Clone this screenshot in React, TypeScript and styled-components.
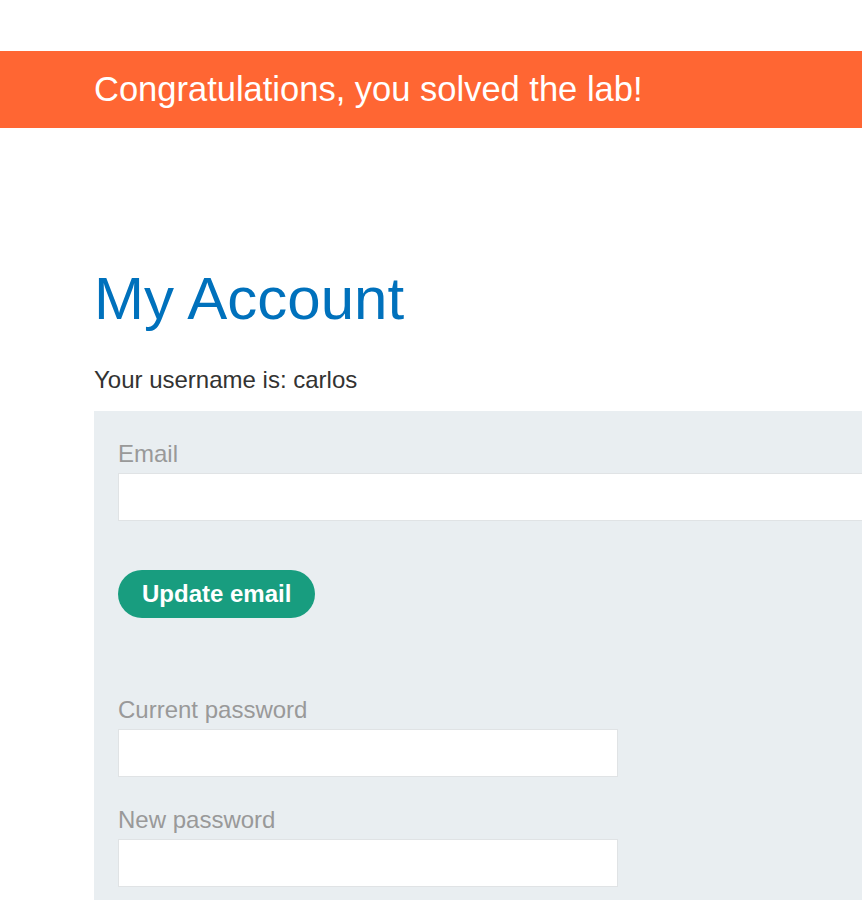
import React from "react";
import styled, { createGlobalStyle } from "styled-components";

const Global = createGlobalStyle`
  html, body { margin: 0; padding: 0; background: #fff; overflow: hidden; }
  body { font-family: "Liberation Sans", Arial, sans-serif; }
`;

const Page = styled.div`
  width: 1100px;
  padding-top: 51px;
`;

const Banner = styled.div`
  background: #ff6633;
  height: 77px;
  display: flex;
  align-items: center;
  padding-left: 94px;
  color: #fff;
  font-size: 34.5px;
`;

const Content = styled.div`
  padding: 135px 0 0 94px;
`;

const Title = styled.h1`
  margin: 0;
  color: #0071bc;
  font-size: 60px;
  font-weight: 400;
  line-height: 72px;
`;

const Username = styled.p`
  margin: 31px 0 0;
  color: #333332;
  font-size: 24px;
  line-height: 28px;
`;

const Panel = styled.form`
  margin-top: 17px;
  background: #e9eef1;
  padding: 29px 24px 20px;
  display: flex;
  flex-direction: column;
`;

const Label = styled.label`
  color: #999;
  font-size: 24px;
  line-height: 28px;
  margin-bottom: 5px;
`;

const Input = styled.input<{ $w?: string }>`
  box-sizing: border-box;
  width: ${(p) => p.$w ?? "100%"};
  height: 48px;
  border: 1px solid #e0e3e5;
  background: #fff;
  margin: 0;
`;

const Button = styled.button`
  align-self: flex-start;
  margin: 49px 0 78px;
  height: 48px;
  padding: 0 24px;
  border: none;
  border-radius: 24px;
  background: #189d7f;
  color: #fff;
  font-family: "Liberation Sans", Arial, sans-serif;
  font-weight: 700;
  font-size: 24px;
`;

const Spacer = styled.div`
  height: 29px;
`;

export default function App() {
  return (
    <>
      <Global />
      <Page>
        <Banner>Congratulations, you solved the lab!</Banner>
        <Content>
          <Title>My Account</Title>
          <Username>Your username is: carlos</Username>
          <Panel>
            <Label>Email</Label>
            <Input />
            <Button type="button">Update email</Button>
            <Label>Current password</Label>
            <Input $w="500px" type="password" />
            <Spacer />
            <Label>New password</Label>
            <Input $w="500px" type="password" />
          </Panel>
        </Content>
      </Page>
    </>
  );
}
